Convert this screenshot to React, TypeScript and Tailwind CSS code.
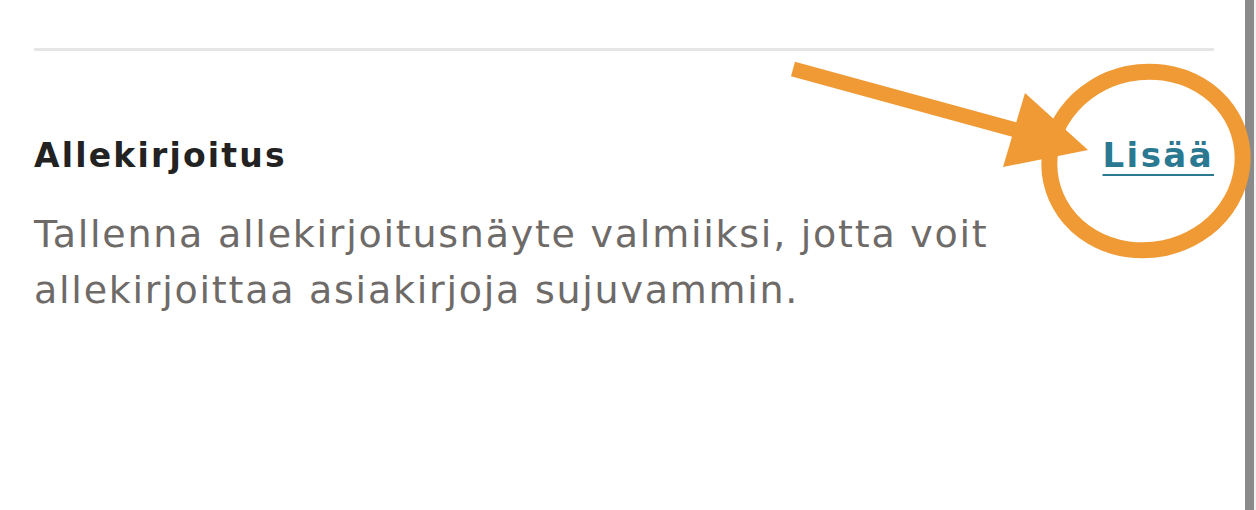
import React from 'react';

// Annotation overlay: orange arrow pointing at the "Lisää" link, plus a hand-drawn ring
const Annotation = () => (
  <svg className="pointer-events-none absolute left-0 top-0" width="1256" height="510" viewBox="0 0 1256 510">
    <line x1="793" y1="69" x2="1016" y2="130" stroke="#ef9a35" strokeWidth="15" />
    <polygon points="1025,93 1003,167 1088,150" fill="#ef9a35" />
    <ellipse cx="1146" cy="161" rx="97" ry="89" fill="none" stroke="#ef9a35" strokeWidth="16" transform="rotate(-12 1146 161)" />
  </svg>
);

export default function App() {
  return (
    <div className="relative flex h-[510px] w-[1256px] overflow-hidden bg-white" style={{ fontFamily: '"DejaVu Sans", Verdana, sans-serif' }}>
      <div className="w-[1245px] px-[34px] pr-[31px] pt-[48px]">
        <div className="h-[3px] bg-[#e6e6e6]" />
        <div className="mt-[84px] flex items-baseline justify-between">
          <h2 className="text-[33px] font-bold leading-[40px] tracking-[2.2px] text-[#222222]">Allekirjoitus</h2>
          <a href="#" className="text-[34px] font-bold leading-[40px] tracking-[2.4px] text-[#2b7891] underline decoration-2 underline-offset-[7px]">
            Lisää
          </a>
        </div>
        <p className="mt-[30px] w-[1000px] text-[38px] leading-[56px] tracking-[1.75px] text-[#6e6a68]">
          Tallenna allekirjoitusnäyte valmiiksi, jotta voit allekirjoittaa asiakirjoja sujuvammin.
        </p>
      </div>
      <div className="w-[9px] bg-[#8a8a8a]" />
      <div className="w-[2px] bg-[#f2f2f2]" />
      <Annotation />
    </div>
  );
}
